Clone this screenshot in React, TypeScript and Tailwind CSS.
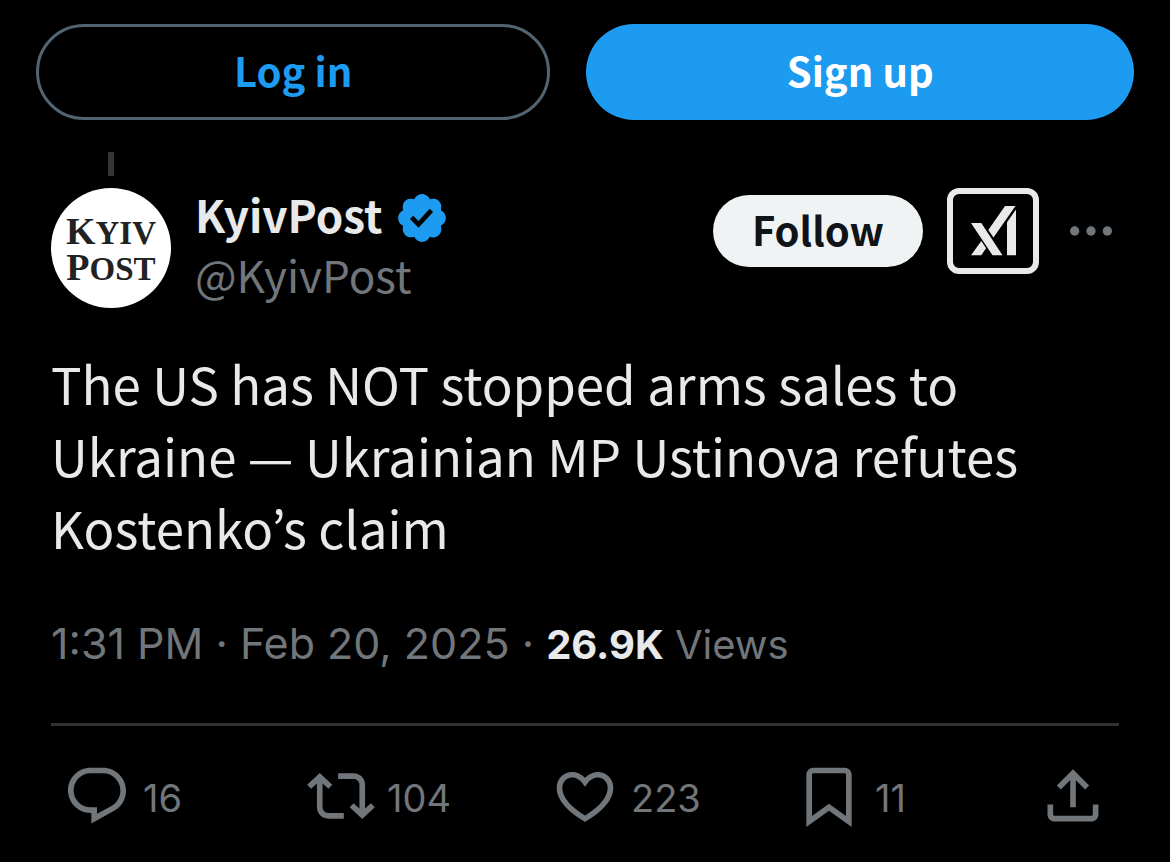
import type { ReactNode } from "react";

type Action = {
  name: string;
  count: string;
  path: string;
};

const ACTIONS: Action[] = [
  {
    name: "Reply",
    count: "16",
    path: "M1.751 10c0-4.42 3.584-8 8.005-8h4.366c4.49 0 8.129 3.64 8.129 8.13 0 2.96-1.607 5.68-4.196 7.11l-8.054 4.46v-3.69h-.067c-4.49.1-8.183-3.51-8.183-8.01zm8.005-6c-3.317 0-6.005 2.69-6.005 6 0 3.37 2.77 6.08 6.138 6.01l.351-.01h1.761v2.3l5.087-2.81c1.951-1.08 3.163-3.13 3.163-5.36 0-3.39-2.744-6.13-6.129-6.13H9.756z",
  },
  {
    name: "Repost",
    count: "104",
    path: "M4.5 3.88l4.432 4.14-1.364 1.46L5.5 7.55V16c0 1.1.896 2 2 2H13v2H7.5c-2.209 0-4-1.79-4-4V7.55L1.432 9.48.068 8.02 4.5 3.88zM16.5 6H11V4h5.5c2.209 0 4 1.79 4 4v8.45l2.068-1.93 1.364 1.46-4.432 4.14-4.432-4.14 1.364-1.46 2.068 1.93V8c0-1.1-.896-2-2-2z",
  },
  {
    name: "Like",
    count: "223",
    path: "M16.697 5.5c-1.222-.06-2.679.51-3.89 2.16l-.805 1.09-.806-1.09C9.984 6.01 8.526 5.44 7.304 5.5c-1.243.07-2.349.78-2.91 1.91-.552 1.12-.633 2.78.479 4.82 1.074 1.97 3.257 4.27 7.129 6.61 3.87-2.34 6.052-4.64 7.126-6.61 1.111-2.04 1.03-3.7.477-4.82-.561-1.13-1.666-1.84-2.908-1.91zm4.187 7.69c-1.351 2.48-4.001 5.12-8.379 7.67l-.503.3-.504-.3c-4.379-2.55-7.029-5.19-8.382-7.67-1.36-2.5-1.41-4.86-.514-6.67.887-1.79 2.647-2.91 4.601-3.01 1.651-.09 3.368.56 4.798 2.01 1.429-1.45 3.146-2.1 4.796-2.01 1.954.1 3.714 1.22 4.601 3.01.896 1.81.846 4.17-.514 6.67z",
  },
  {
    name: "Bookmark",
    count: "11",
    path: "M4 4.5C4 3.12 5.119 2 6.5 2h11C18.881 2 20 3.12 20 4.5v18.44l-8-5.71-8 5.71V4.5zM6.5 4c-.276 0-.5.22-.5.5v14.56l6-4.29 6 4.29V4.5c0-.28-.224-.5-.5-.5h-11z",
  },
];

const SHARE_PATH =
  "M12 2.59l5.7 5.7-1.41 1.42L13 6.41V16h-2V6.41l-3.3 3.3-1.41-1.42L12 2.59zM21 15l-.02 3.51c0 1.38-1.12 2.49-2.5 2.49H5.5C4.11 21 3 19.88 3 18.5V15h2v3.5c0 .28.22.5.5.5h12.98c.28 0 .5-.22.5-.5L19 15h2z";

function ActionIcon({ path }: { path: string }) {
  return (
    <svg viewBox="0 0 24 24" className="size-17 shrink-0 fill-current" aria-hidden="true">
      <path d={path} />
    </svg>
  );
}

function VerifiedBadge() {
  return (
    <svg viewBox="0 0 22 22" className="mt-2 size-14 shrink-0 fill-[#1d9bf0]" aria-hidden="true">
      <path d="M20.396 11c-.018-.646-.215-1.275-.57-1.816-.354-.54-.852-.972-1.438-1.246.223-.607.27-1.264.14-1.897-.131-.634-.437-1.218-.882-1.687-.47-.445-1.053-.75-1.687-.882-.633-.13-1.29-.083-1.897.14-.273-.587-.704-1.086-1.245-1.44S11.647 1.62 11 1.604c-.646.017-1.273.213-1.813.568s-.969.854-1.24 1.44c-.608-.223-1.267-.272-1.902-.14-.635.13-1.22.436-1.69.882-.445.47-.749 1.055-.878 1.688-.13.633-.08 1.29.144 1.896-.587.274-1.087.705-1.443 1.245-.356.54-.555 1.17-.574 1.817.02.647.218 1.276.574 1.817.356.54.856.972 1.443 1.245-.224.606-.274 1.263-.144 1.896.13.634.433 1.218.877 1.688.47.443 1.054.747 1.687.878.633.132 1.29.084 1.897-.136.274.586.705 1.084 1.246 1.439.54.354 1.17.551 1.816.569.647-.016 1.276-.213 1.817-.567s.972-.854 1.245-1.44c.604.239 1.266.296 1.903.164.636-.132 1.22-.447 1.68-.907.46-.46.776-1.044.908-1.681s.075-1.299-.165-1.903c.586-.274 1.084-.705 1.439-1.246.354-.54.551-1.17.569-1.816zM9.662 14.85l-3.429-3.428 1.293-1.302 2.072 2.072 4.4-4.794 1.347 1.246z" />
    </svg>
  );
}

function GrokLogo() {
  return (
    <svg viewBox="0 0 46 50" className="h-[50px] w-[46px] fill-current" aria-hidden="true">
      <path d="M1 17h10.300L32.500 49.300H22.500z" />
      <path d="M35 0h10.500L23.500 31.500l-5.200-7.500z" />
      <path d="M11.300 35l4.800 7.300-4.800 7H1z" />
      <path d="M46 3.500v45.800h-9V16.200z" />
    </svg>
  );
}

function Avatar() {
  return (
    <a
      href="#profile"
      className="mt-1 flex size-30 shrink-0 flex-col items-center justify-center rounded-full bg-white pt-1 font-['Liberation_Serif',serif] text-[33px] leading-[34px] font-bold text-[#222]"
    >
      <span>
        <span className="text-[38px]">K</span>YIV
      </span>
      <span>
        <span className="text-[38px]">P</span>OST
      </span>
    </a>
  );
}

function AuthButton({ className, children }: { className: string; children: ReactNode }) {
  return (
    <button
      type="button"
      className={`h-24 basis-0 rounded-full pb-1 text-[40px] leading-none font-bold ${className}`}
    >
      {children}
    </button>
  );
}

export default function App() {
  return (
    <div className="min-h-screen bg-black font-['Noto_Sans_CJK_JP',sans-serif] text-[#e7e9ea]">
      <nav className="flex gap-9 px-9 pt-6">
        <AuthButton className="grow-13 border-3 border-[#536471] text-[#1d9bf0]">Log in</AuthButton>
        <AuthButton className="grow-14 bg-[#1d9bf0] text-white">Sign up</AuthButton>
      </nav>

      <article className="px-[51px] pt-8 pb-8">
        {/* Thread line coming from the tweet above */}
        <div className="mb-2 flex w-30 justify-center">
          <div className="h-6 w-1.5 bg-[#333639]" />
        </div>

        <header className="flex items-start gap-6">
          <Avatar />
          <div className="min-w-0 grow text-[44px] leading-[60px]">
            <div className="flex h-15 items-center gap-3">
              <a href="#profile" className="font-bold">
                KyivPost
              </a>
              <VerifiedBadge />
            </div>
            <a href="#profile" className="block text-[#71767b]">
              @KyivPost
            </a>
          </div>

          <div className="mt-1 flex shrink-0 items-center gap-6">
            <button
              type="button"
              className="h-18 w-[210px] rounded-full bg-[#eff3f4] pb-1 text-[40px] leading-none font-bold text-[#0f1419]"
            >
              Follow
            </button>
            <button
              type="button"
              aria-label="Explain this post"
              className="flex h-[86px] w-[92px] items-center justify-center rounded-xl border-6 border-[#e7e9ea]"
            >
              <GrokLogo />
            </button>
            <button type="button" aria-label="More" className="text-[#71767b]">
              <svg viewBox="0 0 24 24" className="size-14 fill-current" aria-hidden="true">
                <circle cx="5" cy="12" r="2" />
                <circle cx="12" cy="12" r="2" />
                <circle cx="19" cy="12" r="2" />
              </svg>
            </button>
          </div>
        </header>

        <p className="mt-[39px] text-[51px] leading-[72px]">
          The US has NOT stopped arms sales to Ukraine — Ukrainian MP Ustinova refutes Kostenko’s
          claim
        </p>

        <p className="mt-[54px] font-['Inter',sans-serif] text-[43px] leading-[52px] text-[#71767b]">
          <time dateTime="2025-02-20T13:31">1:31 PM · Feb 20, 2025</time> ·{" "}
          <span className="text-[40px]">
            <b className="font-bold text-[#e7e9ea]">26.9K</b> Views
          </span>
        </p>

        <footer className="mt-13 flex border-t-3 border-[#2f3336] px-3 pt-9 font-['Inter',sans-serif] text-[38px] text-[#71767b]">
          {ACTIONS.map((a) => (
            <div key={a.name} className="flex grow basis-0">
              <button type="button" aria-label={`${a.count} ${a.name}`} className="flex items-center gap-3">
                <ActionIcon path={a.path} />
                <span className="pt-1">{a.count}</span>
              </button>
            </div>
          ))}
          <button type="button" aria-label="Share">
            <ActionIcon path={SHARE_PATH} />
          </button>
        </footer>
      </article>
    </div>
  );
}
